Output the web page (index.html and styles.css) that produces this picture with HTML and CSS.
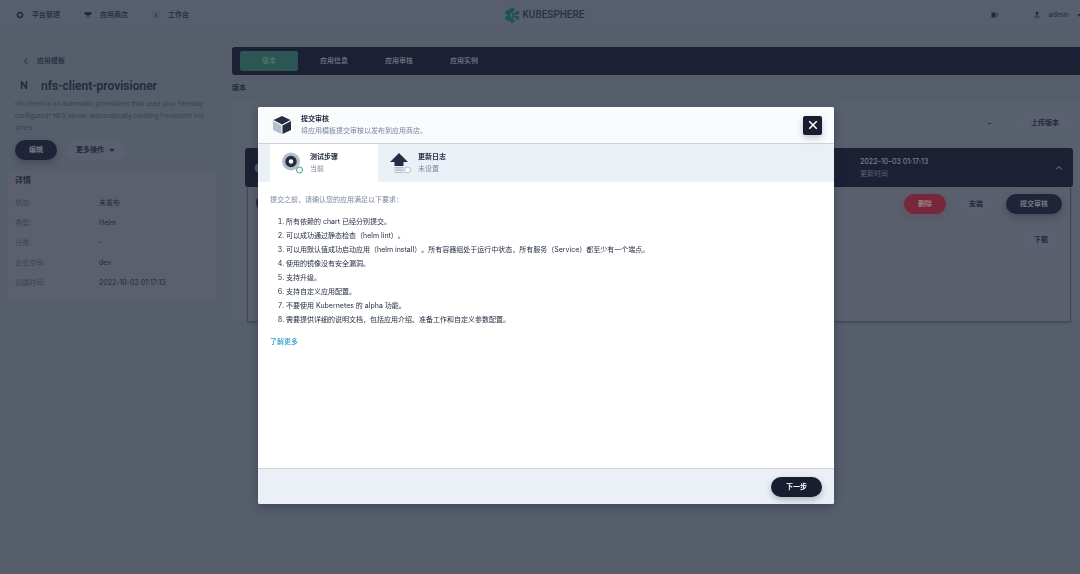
FILE: index.html
```html
<!DOCTYPE html>
<html lang="zh-CN">
<head>
    <meta charset="UTF-8">
    <meta name="viewport" content="width=device-width, initial-scale=1.0">
    <title>KubeSphere</title>
    <link rel="stylesheet" href="styles.css">
</head>
<body>
    <header class="topbar">
        <nav class="topnav">
            <a href="#">
                <svg class="icon" viewBox="0 0 16 16"><path d="M8 1l5 2 2 5-2 5-5 2-5-2-2-5 2-5z" fill="currentColor"/><circle cx="8" cy="8" r="3.5" fill="#575e6d"/></svg>
                平台管理
            </a>
            <a href="#">
                <svg class="icon" viewBox="0 0 16 16"><path d="M3 2h10l3 3-5 4H5L0 5z" fill="currentColor"/><path d="M4 9h8v5H4z" fill="currentColor" opacity=".3"/></svg>
                应用商店
            </a>
            <a href="#">
                <svg class="icon faded" viewBox="0 0 16 16"><path d="M2 2h12v12H2z" fill="none" stroke="currentColor" opacity=".5"/><path d="M7 4h3v3l2 5H5l2-5z" fill="currentColor"/></svg>
                工作台
            </a>
        </nav>
        <a class="logo" href="#">
            <svg viewBox="0 0 32 32"><path d="M16 1l6 3-5 8 3 1 7-6 3 2v6l-9 1v2l9 1v5l-3 2-7-6-3 1 5 8-6 3L2 24V9z" fill="#1c5454"/><path d="M2 13l6 3-6 4M16 12v9l-3-2v-5z" fill="#575e6d"/></svg>
            <span>KUBESPHERE</span>
        </a>
        <div class="user">
            <svg class="icon docs" viewBox="0 0 16 16"><path d="M1 3h8v10H1z" fill="currentColor"/><path d="M10 4h5v8h-5z" fill="currentColor" opacity=".4"/></svg>
            <svg class="icon" viewBox="0 0 16 16"><circle cx="8" cy="4" r="3" fill="currentColor"/><path d="M7 6h2v4H7z" fill="currentColor"/><path d="M3 10h10v4H3z" fill="currentColor" opacity=".5"/></svg>
            <span>admin</span>
            <i class="caret"></i>
        </div>
    </header>

    <div class="page">
        <aside class="sidebar">
            <a class="back" href="#">
                <svg class="icon" viewBox="0 0 16 16"><path d="M11 2L5 8l6 6" fill="none" stroke="currentColor" stroke-width="2"/></svg>
                应用模板
            </a>
            <h1><span class="letter">N</span>nfs-client-provisioner</h1>
            <p class="desc">nfs-client is an automatic provisioner that used your *already<br>configured* NFS server, automatically creating Persistent Vol<br>umes.</p>
            <div class="side-actions">
                <button class="btn primary" type="button">编辑</button>
                <button class="btn plain" type="button">更多操作 <i class="caret"></i></button>
            </div>
            <section class="details">
                <h2>详情</h2>
                <dl>
                    <dt>状态:</dt><dd>未发布</dd>
                    <dt>类型:</dt><dd>Helm</dd>
                    <dt>分类:</dt><dd>-</dd>
                    <dt>企业空间:</dt><dd>dev</dd>
                    <dt>创建时间:</dt><dd>2022-10-03 01:17:13</dd>
                </dl>
            </section>
        </aside>

        <main class="main">
            <nav class="tabs">
                <a class="active" href="#">版本</a>
                <a href="#">应用信息</a>
                <a href="#">应用审核</a>
                <a href="#">应用实例</a>
            </nav>
            <h2 class="main-title">版本</h2>
            <div class="card">
                <div class="toolbar">
                    <i class="mark"></i>
                    <button class="btn plain" type="button">上传版本</button>
                </div>
                <div class="version">
                    <div class="version-head">
                        <i class="dot"></i>
                        <div class="time">
                            <strong>2022–10–03 01:17:13</strong>
                            <span>更新时间</span>
                        </div>
                        <svg class="chevron" viewBox="0 0 16 16"><path d="M2 11l6-6 6 6" fill="none" stroke="currentColor" stroke-width="2"/></svg>
                    </div>
                    <div class="version-body">
                        <i class="knob"></i>
                        <div class="actions">
                            <button class="btn danger" type="button">删除</button>
                            <button class="btn plain" type="button">安装</button>
                            <button class="btn primary" type="button">提交审核</button>
                            <button class="btn plain" type="button">下载</button>
                        </div>
                    </div>
                </div>
            </div>
        </main>
    </div>

    <div class="overlay">
        <div class="modal" role="dialog" aria-labelledby="modal-title">
            <div class="modal-head">
                <svg class="cube" viewBox="0 0 40 40"><path d="M20 2l17 8-17 9L3 10z" fill="#242e42"/><path d="M2 12l17 9v17L2 30z" fill="#b6bec9"/><path d="M38 12l-17 9v17l17-8z" fill="#242e42"/></svg>
                <div class="text">
                    <strong id="modal-title">提交审核</strong>
                    <span>将应用模板提交审核以发布到应用商店。</span>
                </div>
                <button class="close" type="button" aria-label="关闭">
                    <svg viewBox="0 0 16 16"><path d="M3 3l10 10M13 3L3 13" stroke="#fff" stroke-width="2"/></svg>
                </button>
            </div>
            <div class="steps">
                <button class="step current" type="button">
                    <svg class="step-icon" viewBox="0 0 44 44"><circle cx="18" cy="19" r="18" fill="#b6bec9"/><circle cx="18" cy="19" r="8" fill="#fff" stroke="#242e42" stroke-width="7"/><circle cx="35" cy="36" r="6" fill="#fff" stroke="#3f9f83" stroke-width="2"/></svg>
                    <span class="text">
                        <strong>测试步骤</strong>
                        <span>当前</span>
                    </span>
                </button>
                <button class="step" type="button">
                    <svg class="step-icon" viewBox="0 0 44 44"><path d="M18 2l18 18h-9v8H9v-8H0z" fill="#242e42"/><path d="M9 30h18v3H9zM9 35h18v3H9zM9 40h18v2H9z" fill="#b6bec9"/><circle cx="35" cy="36" r="6" fill="#fff" stroke="#b6bec9" stroke-width="2"/></svg>
                    <span class="text">
                        <strong>更新日志</strong>
                        <span>未设置</span>
                    </span>
                </button>
            </div>
            <div class="modal-body">
                <p>提交之前，请确认您的应用满足以下要求：</p>
                <ol>
                    <li>所有依赖的 chart 已经分别提交。</li>
                    <li>可以成功通过静态检查（helm lint）。</li>
                    <li>可以用默认值成功启动应用（helm install）。所有容器组处于运行中状态，所有服务（Service）都至少有一个端点。</li>
                    <li>使用的镜像没有安全漏洞。</li>
                    <li>支持升级。</li>
                    <li>支持自定义应用配置。</li>
                    <li>不要使用 Kubernetes 的 alpha 功能。</li>
                    <li>需要提供详细的说明文档，包括应用介绍、准备工作和自定义参数配置。</li>
                </ol>
                <a href="#">了解更多</a>
            </div>
            <div class="modal-foot">
                <button class="btn next" type="button">下一步</button>
            </div>
        </div>
    </div>
</body>
</html>
```
FILE: styles.css
```css
* {
    box-sizing: border-box;
}
body {
    margin: 0;
    min-height: 100vh;
    background-color: #565e6c;
    color: #232a3b;
    font-family: Inter, "Noto Sans CJK SC", sans-serif;
    font-size: 7px;
    line-height: 12px;
    text-spacing-trim: space-all;
    overflow: hidden;
}
a {
    color: inherit;
    text-decoration: none;
}
h1, h2, p, dl, dd, ol {
    margin: 0;
}
button {
    font: inherit;
    border: none;
    cursor: pointer;
}
.icon {
    width: 8px;
    height: 8px;
    flex: none;
}
.caret {
    border: 3px solid transparent;
    border-top-color: currentColor;
    border-bottom: none;
}

/* top bar */
.topbar {
    display: grid;
    grid-template-columns: 1fr auto 1fr;
    align-items: center;
    height: 30px;
    padding-left: 8px;
    background-color: #575e6d;
}
.topnav {
    display: flex;
    gap: 24px;
    padding-left: 8px;
    font-weight: 500;
}
.topnav a {
    display: flex;
    align-items: center;
    gap: 8px;
}
.faded {
    opacity: 0.5;
}
.logo {
    display: flex;
    align-items: center;
    gap: 3px;
    color: #283047;
    font-family: Roboto, sans-serif;
    font-size: 10px;
    font-weight: 500;
}
.logo svg {
    width: 16px;
    height: 16px;
}
.user {
    display: flex;
    align-items: center;
    justify-content: flex-end;
    gap: 8px;
    margin-right: -3px;
}
.docs {
    margin-right: 26px;
}

/* page */
.page {
    display: flex;
    align-items: flex-start;
    gap: 16px;
    padding: 17px 0 0 8px;
}
.sidebar {
    width: 208px;
    flex: none;
}
.back {
    display: flex;
    align-items: center;
    gap: 7px;
    padding: 8px 14px;
    font-weight: 500;
}
.sidebar h1 {
    display: flex;
    gap: 12px;
    padding: 1px 12px 0;
    font-family: Roboto, sans-serif;
    font-size: 12px;
    font-weight: 600;
    line-height: 20px;
}
.letter {
    width: 9px;
    font-size: 11px;
}
.desc {
    padding: 2px 0 0 7px;
    color: #3a4252;
    font-family: Roboto, sans-serif;
    white-space: nowrap;
}
.side-actions {
    display: flex;
    gap: 8px;
    padding: 6px 7px 12px;
}
.btn {
    height: 20px;
    padding: 0 14px;
    border-radius: 10px;
    font-weight: 600;
    line-height: 20px;
}
.primary {
    background-color: #1f2439;
    color: #737a88;
    box-shadow: 0 3px 6px rgba(30, 36, 57, 0.3);
}
.plain {
    display: inline-flex;
    align-items: center;
    gap: 5px;
    background-color: #5a606f;
    color: #232a3b;
}
.danger {
    background-color: #762739;
    color: #a07d89;
    box-shadow: 0 3px 6px rgba(118, 39, 57, 0.2);
}
.side-actions .plain {
    padding: 0 11px;
}
.details {
    padding: 2px 7px 6px;
    background-color: #5c606d;
}
.details h2 {
    font-size: 8px;
    line-height: 12px;
}
.details dl {
    display: grid;
    grid-template-columns: 84px 1fr;
    padding-top: 7px;
    line-height: 20px;
}
.details dt {
    color: #3c4352;
}

/* main column */
.main {
    flex: 1;
    min-width: 0;
}
.tabs {
    display: flex;
    gap: 7px;
    padding: 4px 8px;
    border-radius: 3px 0 0 3px;
    background-color: #1b2034;
    color: #777d8a;
    font-weight: 500;
    line-height: 20px;
    text-align: center;
}
.tabs a {
    width: 58px;
}
.tabs .active {
    border-radius: 2px;
    background-color: #2b5653;
    color: #54796f;
}
.main-title {
    padding: 7px 0;
    font-size: 7px;
    font-weight: 600;
}
.card {
    padding: 12px 7px 0 13px;
    background-color: #585f6d;
}
.toolbar {
    display: flex;
    align-items: center;
    justify-content: flex-end;
    gap: 26px;
    padding-bottom: 15px;
}
.mark {
    width: 3px;
    height: 1px;
    background-color: #232a3b;
}
.version-head {
    display: flex;
    align-items: center;
    height: 39px;
    padding: 0 10px;
    border-radius: 3px;
    background-color: #1b2034;
    color: #7b818e;
}
.dot {
    width: 6px;
    height: 8px;
    border-radius: 3px;
    background-color: #565e6c;
}
.time {
    display: flex;
    flex-direction: column;
    width: 203px;
    margin-left: auto;
}
.time strong {
    font-weight: 500;
}
.time span {
    color: #5b6271;
}
.chevron {
    width: 8px;
    height: 8px;
    margin-left: -8px;
}
.version-body {
    display: flex;
    align-items: flex-start;
    min-height: 135px;
    margin: 0 2px;
    padding: 7px 8px;
    border: 1px solid #414959;
    border-top: none;
    background-color: #595f6d;
    box-shadow: 0 1px 2px rgba(30, 36, 57, 0.3);
}
.knob {
    width: 18px;
    height: 18px;
    border-radius: 9px;
    background-color: #1f2439;
}
.actions {
    display: flex;
    flex-wrap: wrap;
    justify-content: flex-end;
    gap: 16px 9px;
    width: 172px;
    margin-left: auto;
}

/* dialog */
.overlay {
    position: fixed;
    inset: 0;
    display: flex;
    align-items: flex-start;
    justify-content: center;
    padding: 107px 0 0 12px;
}
.modal {
    width: 576px;
    max-width: 94%;
    border-radius: 2px;
    overflow: hidden;
    background-color: #fff;
    box-shadow: 0 3px 8px rgba(30, 36, 57, 0.4);
}
.modal-head {
    display: flex;
    align-items: center;
    gap: 9px;
    padding: 6px 12px 6px 14px;
    border-bottom: 1px solid #ccd3db;
    background-color: #f9fbfd;
}
.cube {
    width: 20px;
    height: 20px;
}
.text {
    display: flex;
    flex-direction: column;
    color: #79879c;
    text-align: left;
}
.text strong {
    color: #242e42;
    font-weight: 700;
}
.close {
    display: flex;
    align-items: center;
    justify-content: center;
    width: 19px;
    height: 19px;
    margin-left: auto;
    padding: 0;
    border-radius: 2px;
    background-color: #181d30;
    box-shadow: 0 3px 6px rgba(36, 46, 66, 0.25);
}
.close svg {
    width: 12px;
    height: 12px;
}
.steps {
    display: flex;
    padding-left: 12px;
    background-color: #ebf0f6;
}
.step {
    display: flex;
    align-items: center;
    gap: 6px;
    width: 108px;
    height: 38px;
    padding: 0 12px;
    background-color: transparent;
}
.step.current {
    background-color: #fff;
}
.step-icon {
    width: 22px;
    height: 22px;
}
.modal-body {
    min-height: 286px;
    padding: 12px;
    color: #242e42;
}
.modal-body p {
    color: #79879c;
}
.modal-body ol {
    padding: 9px 0 9px 16px;
    line-height: 14px;
}
.modal-body a {
    color: #329dce;
    font-weight: 500;
}
.modal-foot {
    display: flex;
    justify-content: flex-end;
    padding: 8px 12px 7px;
    border-top: 1px solid #ccd3db;
    background-color: #ebf0f6;
}
.next {
    padding: 0 15px;
    background-color: #181d30;
    color: #fff;
    box-shadow: 0 3px 6px rgba(36, 46, 66, 0.3);
}
```
